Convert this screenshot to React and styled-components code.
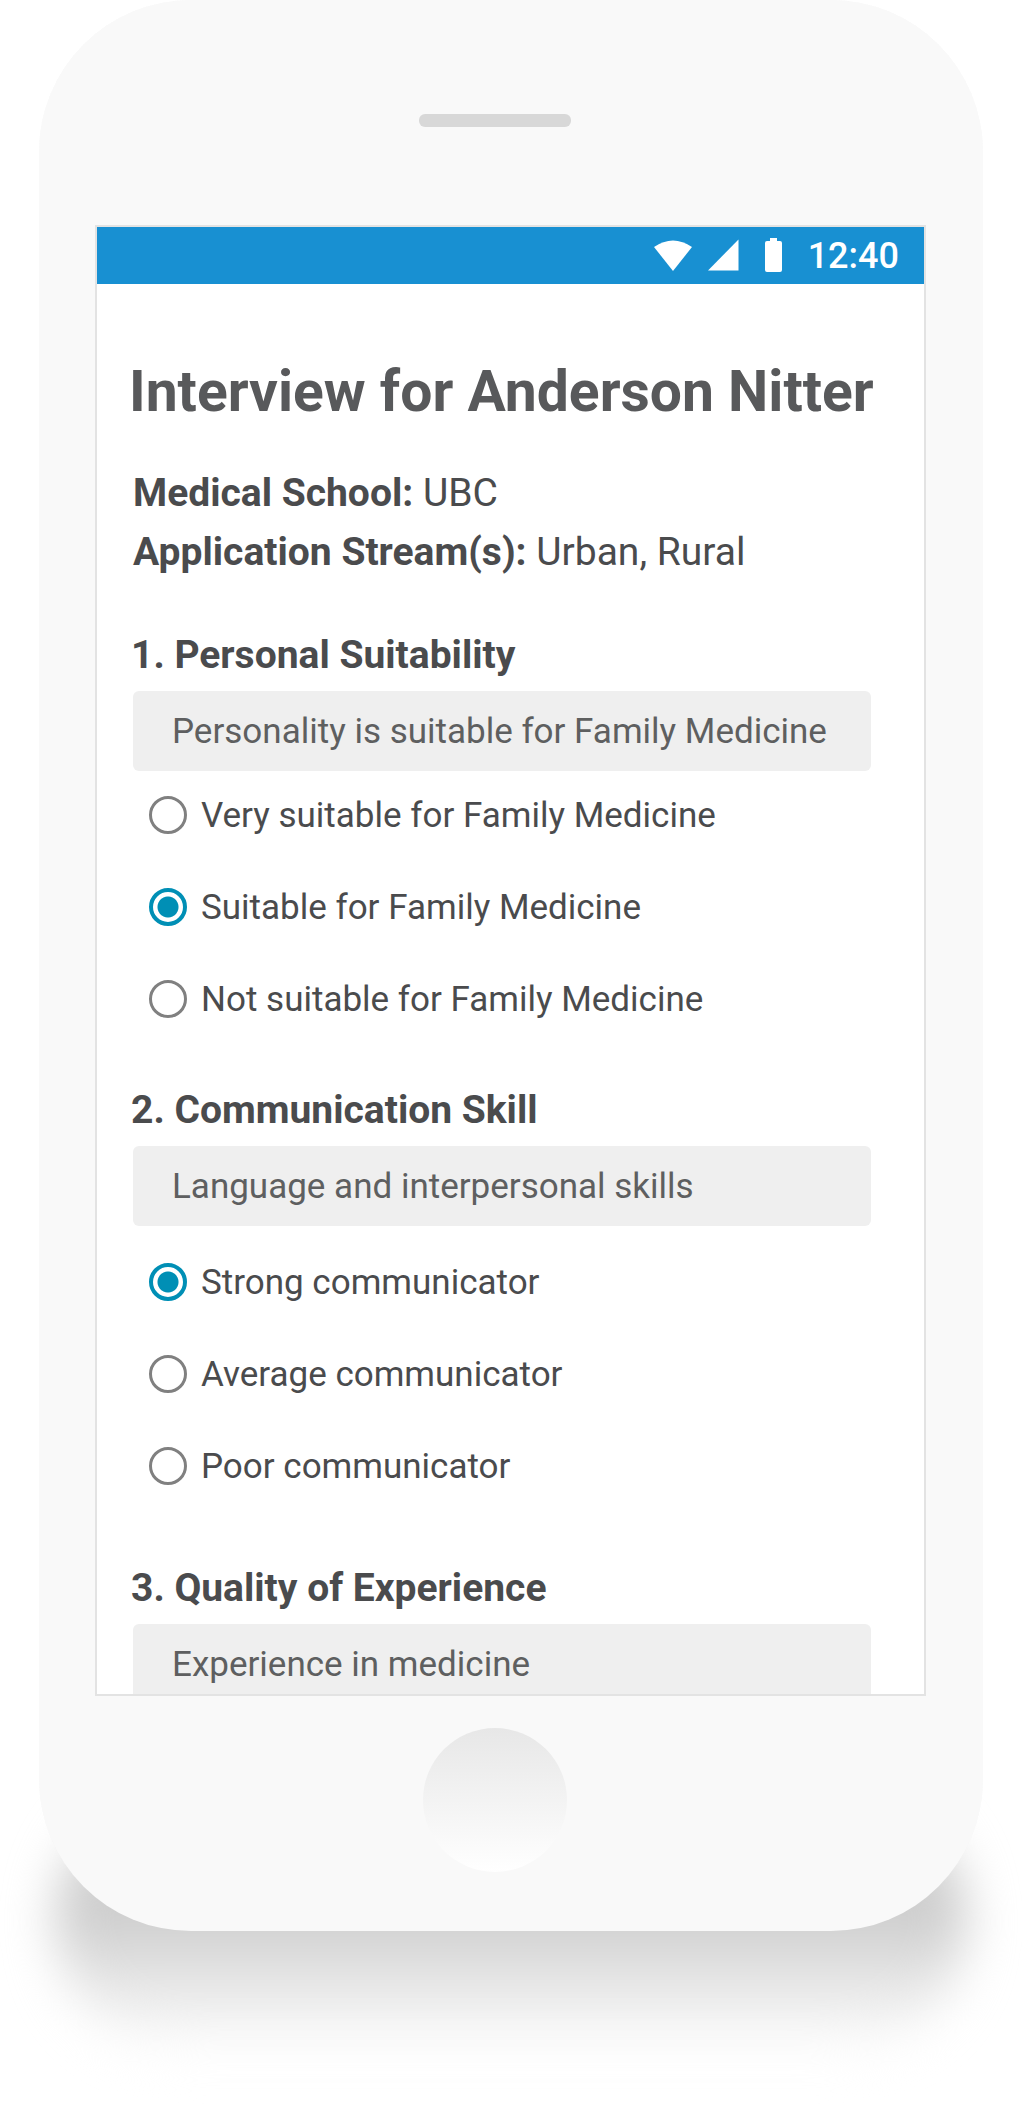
import React from "react";
import styled, { createGlobalStyle } from "styled-components";

const GlobalStyle = createGlobalStyle`
  *, *::before, *::after { box-sizing: border-box; }
  body {
    margin: 0;
    background: #fff;
    font-family: Roboto, "Liberation Sans", sans-serif;
    color: #4a4b4d;
  }
`;

const Page = styled.main`
  padding: 0 39px 175px;
  overflow: hidden;
`;

const Phone = styled.div`
  position: relative;
  isolation: isolate;
  padding: 0 57px 59px 56px;
  border-radius: 152px;
  background: #f9f9f9;
`;

const Shadow = styled.div`
  position: absolute;
  z-index: -2;
  inset: auto 16px -120px;
  height: 260px;
  border-radius: 130px;
  background: linear-gradient(#fff 5%, #cacaca 34%, #cecece 48%, #fff);
  filter: blur(24px);
`;

const Shell = styled.div`
  position: absolute;
  z-index: -1;
  inset: 0;
  border-radius: inherit;
  background: inherit;
`;

const Hardware = styled.div`
  display: flex;
  justify-content: center;
  padding: ${(p) => (p.$top ? "114px 31px 98px 0" : "32px 31px 0 0")};
`;

const Speaker = styled.div`
  width: 152px;
  height: 13px;
  border-radius: 6px;
  background: #d8d8d8;
`;

const HomeButton = styled.button`
  width: 144px;
  height: 144px;
  padding: 0;
  border: 0;
  border-radius: 50%;
  background: linear-gradient(#e7e7e7, #fff);
`;

const Screen = styled.section`
  height: 1471px;
  overflow: hidden;
  border: 2px solid #e3e3e3;
  background: #fff;
`;

const StatusBar = styled.header`
  display: flex;
  align-items: center;
  justify-content: flex-end;
  height: 57px;
  padding-right: 25px;
  background: #1890d2;
  color: #fff;
`;

const StatusIcons = styled.svg`
  width: 130px;
  height: 36px;
  margin-right: 25px;
  fill: currentColor;
`;

const Clock = styled.time`
  padding-top: 2px;
  font-size: 36px;
  font-weight: 500;
  line-height: 55px;
`;

const Form = styled.form`
  padding: 72px 53px 0 36px;
`;

const Title = styled.h1`
  margin: 0 0 36px -4px;
  color: #58595b;
  font-size: 57px;
  font-weight: 700;
  line-height: 72px;
  white-space: nowrap;
`;

const Detail = styled.p`
  margin: 0;
  font-size: 39px;
  line-height: 59px;
`;

const Question = styled.fieldset`
  min-width: 0;
  margin: 0;
  padding: ${(p) => p.$space} 0 0;
  border: 0;
`;

const Heading = styled.h2`
  margin: 0 0 0 -2px;
  font-size: 39px;
  font-weight: 700;
  line-height: 48px;
`;

const Hint = styled.p`
  margin: 12px 0 0;
  padding: 2px 39px 0;
  border-radius: 6px;
  background: #efefef;
  color: #5e5f60;
  font-size: 35px;
  line-height: 78px;
`;

const Options = styled.div`
  display: flex;
  flex-direction: column;
  gap: 28px;
  padding: ${(p) => p.$space} 0 0 16px;
`;

const Option = styled.label`
  display: flex;
  align-items: center;
  gap: 14px;
  height: 64px;
  font-size: 35px;
`;

const Radio = styled.input`
  appearance: none;
  flex: none;
  width: 38px;
  height: 38px;
  margin: 0;
  border: 3px solid #808080;
  border-radius: 50%;
  background: #fff;

  &:checked {
    border-color: #008fb5;
    border-width: 4px;
    background: radial-gradient(circle, #008fb5 10px, #fff 11px);
  }
`;

const questions = [
  {
    name: "suitability",
    title: "1. Personal Suitability",
    hint: "Personality is suitable for Family Medicine",
    options: ["Very suitable for Family Medicine", "Suitable for Family Medicine", "Not suitable for Family Medicine"],
    selected: 1,
    space: "49px",
    optionSpace: "12px",
  },
  {
    name: "communication",
    title: "2. Communication Skill",
    hint: "Language and interpersonal skills",
    options: ["Strong communicator", "Average communicator", "Poor communicator"],
    selected: 0,
    space: "55px",
    optionSpace: "24px",
  },
  {
    name: "experience",
    title: "3. Quality of Experience",
    hint: "Experience in medicine",
    options: [],
    space: "66px",
  },
];

export default function App() {
  return (
    <>
      <GlobalStyle />
      <Page>
        <Phone>
          <Shadow />
          <Shell />
          <Hardware $top>
            <Speaker />
          </Hardware>
          <Screen>
            <StatusBar>
              <StatusIcons viewBox="0 1 130 36" aria-hidden="true">
                <path d="M1 10 Q20 -3 39 10 L20 34Z" />
                <path d="M55 33.500 L85.500 2.500 V33.500Z" />
                <path d="M117 1h7v3h3a2 2 0 0 1 2 2v27a2 2 0 0 1-2 2h-13a2 2 0 0 1-2-2V6a2 2 0 0 1 2-2h3Z" />
              </StatusIcons>
              <Clock dateTime="12:40">12:40</Clock>
            </StatusBar>
            <Form>
              <Title>Interview for Anderson Nitter</Title>
              <Detail>
                <strong>Medical School:</strong> UBC
              </Detail>
              <Detail>
                <strong>Application Stream(s):</strong> Urban, Rural
              </Detail>
              {questions.map((q) => (
                <Question key={q.name} $space={q.space} aria-labelledby={`${q.name}-title`}>
                  <Heading id={`${q.name}-title`}>{q.title}</Heading>
                  <Hint>{q.hint}</Hint>
                  {q.options.length > 0 && (
                    <Options $space={q.optionSpace}>
                      {q.options.map((text, i) => (
                        <Option key={text}>
                          <Radio type="radio" name={q.name} defaultChecked={i === q.selected} />
                          {text}
                        </Option>
                      ))}
                    </Options>
                  )}
                </Question>
              ))}
            </Form>
          </Screen>
          <Hardware>
            <HomeButton type="button" aria-label="Home" />
          </Hardware>
        </Phone>
      </Page>
    </>
  );
}
